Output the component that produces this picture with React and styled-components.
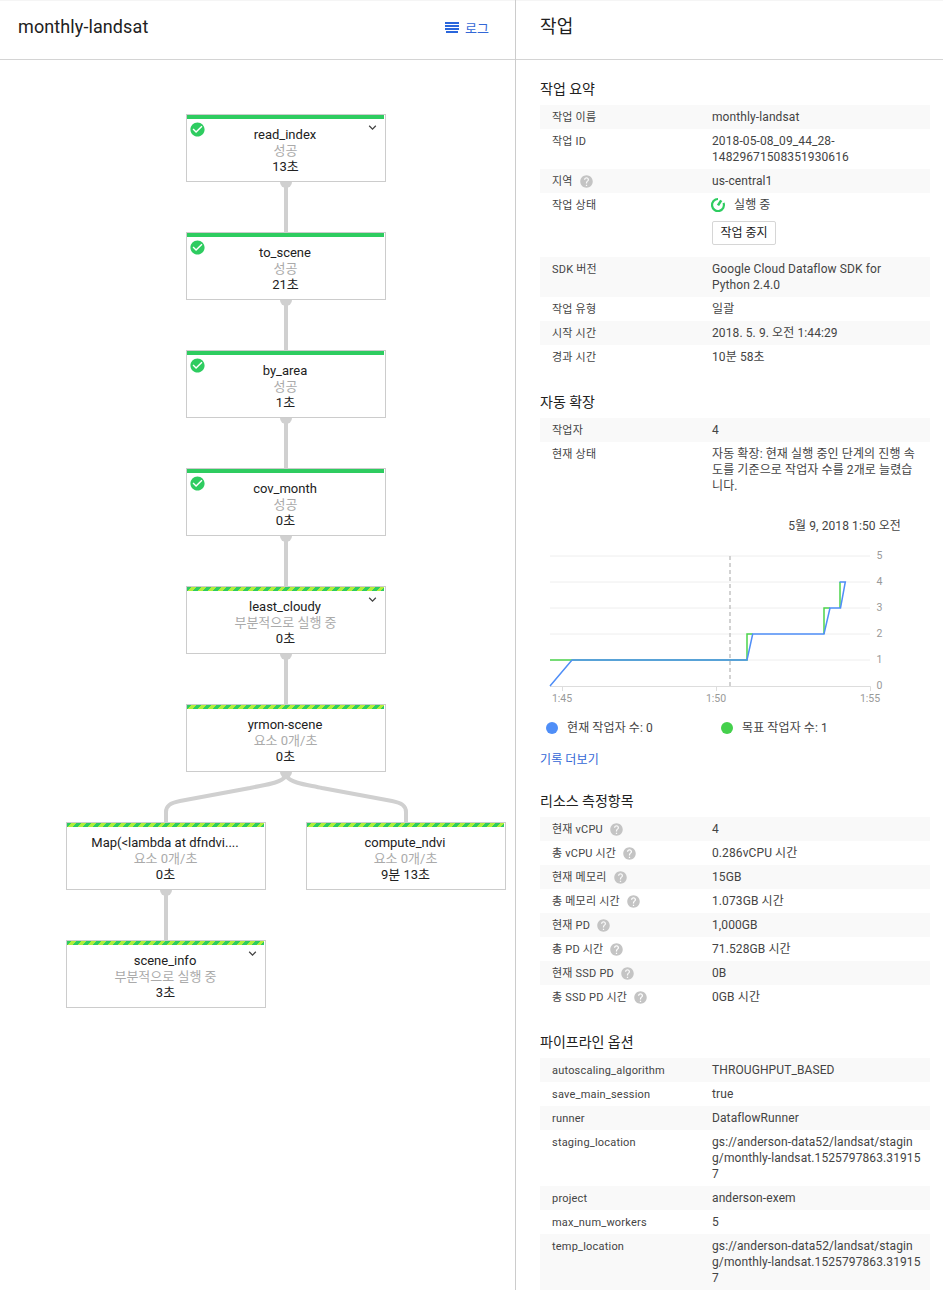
import React from "react";
import styled, { createGlobalStyle } from "styled-components";
import { MdCheckCircle, MdHelp, MdKeyboardArrowDown } from "react-icons/md";

const GlobalStyle = createGlobalStyle`
  html, body {
    margin: 0;
    padding: 0;
    background: #fff;
  }
  body {
    font-family: Roboto, "Noto Sans CJK KR", sans-serif;
    font-size: 12px;
    letter-spacing: 0.1px;
    color: #212121;
  }
`;

const Page = styled.div`
  display: flex;
  width: 943px;
  height: 1290px;
  overflow: hidden;
`;

const LeftPanel = styled.div`
  width: 515px;
  flex: none;
  border-right: 1px solid #ccc;
  display: flex;
  flex-direction: column;
`;

const RightPanel = styled.div`
  flex: 1;
  min-width: 0;
  display: flex;
  flex-direction: column;
`;

const Header = styled.div`
  height: 59px;
  flex: none;
  box-sizing: border-box;
  border-top: 1px solid #f5f5f5;
  box-shadow: 0 1px 0 #d4d4d4;
  margin-bottom: 1px;
  display: flex;
  justify-content: space-between;
  padding: ${(p) => (p.$right ? "14px 24px 0" : "14px 26px 0 18px")};
`;

const HeaderTitle = styled.div`
  font-size: 18px;
  line-height: 24px;
  color: #212121;
`;

const LogLink = styled.a`
  display: flex;
  align-items: center;
  gap: 6px;
  height: 24px;
  font-size: 13px;
  letter-spacing: 0;
  color: #3367d6;
`;

const Canvas = styled.div`
  position: relative;
  flex: 1;
`;

const EdgeLayer = styled.svg`
  position: absolute;
  left: 0;
  top: 0;
`;

const NodeBox = styled.div`
  position: absolute;
  left: ${(p) => p.$x}px;
  top: ${(p) => p.$y}px;
  width: 200px;
  height: 68px;
  box-sizing: border-box;
  border: 1px solid #ccc;
  padding-right: 1px;
  background: #fff;
  text-align: center;
  font-size: 13px;
  line-height: 16px;
  letter-spacing: 0;
`;

const NodeBar = styled.div`
  height: 4px;
  margin-bottom: 8px;
  background: ${(p) =>
    p.$striped
      ? "repeating-linear-gradient(135deg, #2ecc60 0, #2ecc60 3.5px, #b2ee3a 3.5px, #b2ee3a 7px)"
      : "#2ecc60"};
`;

const NodeName = styled.div`
  color: #212121;
  white-space: nowrap;
  margin-right: 1px;
`;

const NodeStatus = styled.div`
  color: #aaa;
`;

const NodeTime = styled.div`
  color: #212121;
`;

const NodeCheck = styled(MdCheckCircle)`
  position: absolute;
  left: 1.5px;
  top: 6px;
  color: #2ecc60;
`;

const NodeChevron = styled(MdKeyboardArrowDown)`
  position: absolute;
  right: 5px;
  top: 5px;
  color: #444;
`;

const Details = styled.div`
  padding: 18px 13px 0 24px;
`;

const Section = styled.section`
  margin-bottom: 22px;
`;

const SectionTitle = styled.h2`
  margin: 0 0 5px;
  font-size: 14px;
  font-weight: 400;
  line-height: 22px;
  letter-spacing: 0;
  color: #212121;
`;

const Row = styled.div`
  display: grid;
  grid-template-columns: 172px 1fr;
  padding: 4px 0;
  line-height: 16px;
  background: ${(p) => (p.$shade ? "#f9f9f9" : "transparent")};
`;

const Label = styled.div`
  padding: 1px 0 0 12px;
  margin-bottom: -1px;
  color: #444;
  display: flex;
  align-items: flex-start;
  gap: 6px;
  font-size: 11px;
  letter-spacing: 0.2px;
`;

const Value = styled.div`
  color: #444;
  padding-right: 9px;
  overflow-wrap: anywhere;
  word-break: ${(p) => (p.$breakAll ? "break-all" : "normal")};
`;

const HelpIcon = styled(MdHelp)`
  flex: none;
  color: #c4c4c4;
`;

const StatusLine = styled.div`
  display: flex;
  align-items: center;
  gap: 8px;
  margin-left: -2px;
  height: 16px;
`;

const StopButton = styled.button`
  display: block;
  margin: 8px 0;
  width: 64px;
  height: 24px;
  padding: 0 0 3px;
  background: #fff;
  border: 1px solid #d6d6d6;
  border-radius: 2px;
  font-family: inherit;
  font-size: 12px;
  color: #212121;
`;

const ChartDate = styled.div`
  margin-top: 20px;
  line-height: 16px;
  padding-right: 29px;
  text-align: right;
  color: #444;
`;

const ChartSvg = styled.svg`
  display: block;
  margin-top: 11px;
`;

const AxisText = styled.text`
  font-family: Roboto, sans-serif;
  font-size: 10.5px;
  letter-spacing: 0;
  fill: #999;
`;

const Legend = styled.div`
  display: flex;
  margin-top: 10px;
  line-height: 16px;
  color: #444;
`;

const LegendItem = styled.div`
  display: flex;
  align-items: center;
  gap: 9px;
  width: ${(p) => p.$width}px;
  padding-left: 6px;
  box-sizing: border-box;
`;

const LegendDot = styled.span`
  width: 12px;
  height: 12px;
  border-radius: 50%;
  background: ${(p) => p.$color};
`;

const MoreLink = styled.a`
  display: block;
  margin-top: 16px;
  line-height: 16px;
  color: #3367d6;
`;

const nodes = [
  { name: "read_index", status: "성공", time: "13초", x: 186, y: 54, done: true, chevron: true },
  { name: "to_scene", status: "성공", time: "21초", x: 186, y: 172, done: true },
  { name: "by_area", status: "성공", time: "1초", x: 186, y: 290, done: true },
  { name: "cov_month", status: "성공", time: "0초", x: 186, y: 408, done: true },
  { name: "least_cloudy", status: "부분적으로 실행 중", time: "0초", x: 186, y: 526, chevron: true },
  { name: "yrmon-scene", status: "요소 0개/초", time: "0초", x: 186, y: 644 },
  { name: "Map(<lambda at dfndvi....", status: "요소 0개/초", time: "0초", x: 66, y: 762 },
  { name: "compute_ndvi", status: "요소 0개/초", time: "9분 13초", x: 306, y: 762 },
  { name: "scene_info", status: "부분적으로 실행 중", time: "3초", x: 66, y: 880, chevron: true },
];

const edgeStarts = [
  [286, 122],
  [286, 240],
  [286, 358],
  [286, 476],
  [286, 594],
  [166, 830],
];

const summaryRows = [
  { label: "작업 이름", value: "monthly-landsat" },
  { label: "작업 ID", value: "2018-05-08_09_44_28-14829671508351930616" },
  { label: "지역", help: true, value: "us-central1" },
  { label: "작업 상태", running: true },
  { label: "SDK 버전", value: "Google Cloud Dataflow SDK for Python 2.4.0" },
  { label: "작업 유형", value: "일괄" },
  { label: "시작 시간", value: "2018. 5. 9. 오전 1:44:29" },
  { label: "경과 시간", value: "10분 58초" },
];

const scalingRows = [
  { label: "작업자", value: "4" },
  { label: "현재 상태", value: "자동 확장: 현재 실행 중인 단계의 진행 속도를 기준으로 작업자 수를 2개로 늘렸습니다." },
];

const resourceRows = [
  { label: "현재 vCPU", help: true, value: "4" },
  { label: "총 vCPU 시간", help: true, value: "0.286vCPU 시간" },
  { label: "현재 메모리", help: true, value: "15GB" },
  { label: "총 메모리 시간", help: true, value: "1.073GB 시간" },
  { label: "현재 PD", help: true, value: "1,000GB" },
  { label: "총 PD 시간", help: true, value: "71.528GB 시간" },
  { label: "현재 SSD PD", help: true, value: "0B" },
  { label: "총 SSD PD 시간", help: true, value: "0GB 시간" },
];

const optionRows = [
  { label: "autoscaling_algorithm", value: "THROUGHPUT_BASED" },
  { label: "save_main_session", value: "true" },
  { label: "runner", value: "DataflowRunner" },
  { label: "staging_location", breakAll: true, value: "gs://anderson-data52/landsat/staging/monthly-landsat.1525797863.319157" },
  { label: "project", value: "anderson-exem" },
  { label: "max_num_workers", value: "5" },
  { label: "temp_location", breakAll: true, value: "gs://anderson-data52/landsat/staging/monthly-landsat.1525797863.319157" },
];

const LogIcon = () => (
  <svg width="14" height="11" viewBox="0 0 14 11">
    <path d="M0 0h14v2H0zM0 3h14v2H0zM0 6h14v2H0zM1 9h12v2H1z" fill="#2a66dc" />
  </svg>
);

const RunningIcon = () => (
  <svg width="16" height="16" viewBox="0 0 16 16">
    <path d="M8 2 A6 6 0 1 0 13.6 5.8" fill="none" stroke="#2ecc60" strokeWidth="2.2" />
    <path d="M8 8.4 L11.2 3.4" fill="none" stroke="#2ecc60" strokeWidth="2.6" />
  </svg>
);

const Graph = () => (
  <Canvas>
    <EdgeLayer width="515" height="1230">
      {edgeStarts.map(([x, y]) => (
        <g key={`${x}-${y}`} fill="#d0d0d0">
          <circle cx={x} cy={y} r="6" />
          <rect x={x - 2} y={y} width="4" height="50" />
        </g>
      ))}
      <circle cx="286" cy="712" r="6" fill="#d0d0d0" />
      <path
        d="M286 716 C280 724 262 725 250 728 L180 741 C170 743 166 746 166 752 L166 764 M286 716 C292 724 310 725 322 728 L392 741 C402 743 406 746 406 752 L406 764"
        fill="none"
        stroke="#d0d0d0"
        strokeWidth="4"
      />
    </EdgeLayer>
    {nodes.map((node) => (
      <NodeBox key={node.name} $x={node.x} $y={node.y}>
        <NodeBar $striped={!node.done} />
        {node.done && <NodeCheck size={17} />}
        {node.chevron && <NodeChevron size={15} />}
        <NodeName>{node.name}</NodeName>
        <NodeStatus>{node.status}</NodeStatus>
        <NodeTime>{node.time}</NodeTime>
      </NodeBox>
    ))}
  </Canvas>
);

const DetailRows = ({ rows }) =>
  rows.map((row, i) => (
    <Row key={row.label} $shade={i % 2 === 0}>
      <Label>
        {row.label}
        {row.help && <HelpIcon size={15} />}
      </Label>
      <Value $breakAll={row.breakAll}>
        {row.running ? (
          <>
            <StatusLine>
              <RunningIcon />
              실행 중
            </StatusLine>
            <StopButton>작업 중지</StopButton>
          </>
        ) : (
          row.value
        )}
      </Value>
    </Row>
  ));

const gridY = [556, 582, 608, 634, 660];

const WorkerChart = () => (
  <ChartSvg width="390" height="165" viewBox="540 545 390 165">
    {gridY.map((y) => (
      <line key={y} x1="550" x2="870" y1={y} y2={y} stroke="#eee" />
    ))}
    <path d="M550 686.5H870.5V691M562.5 686.5V691M716.5 686.5V691" fill="none" stroke="#ddd" />
    <line x1="730" x2="730" y1="556" y2="686" stroke="#c4c4c4" strokeWidth="1.5" strokeDasharray="4 3" />
    <path
      d="M550 660H747V634H752.7M824 634V608H830M840 608V582"
      fill="none"
      stroke="#4cd44c"
      strokeWidth="1.5"
    />
    <path
      d="M550 686L572 660H747L752.7 634H824L830 608H840.5L845.3 582H839.5"
      fill="none"
      stroke="#4f8ef7"
      strokeWidth="1.5"
    />
    {[5, 4, 3, 2, 1, 0].map((n, i) => (
      <AxisText key={n} x="876.5" y={559 + i * 26}>
        {n}
      </AxisText>
    ))}
    <AxisText x="562" y="702" textAnchor="middle">1:45</AxisText>
    <AxisText x="716" y="702" textAnchor="middle">1:50</AxisText>
    <AxisText x="870" y="702" textAnchor="middle">1:55</AxisText>
  </ChartSvg>
);

const App = () => (
  <Page>
    <GlobalStyle />
    <LeftPanel>
      <Header>
        <HeaderTitle>monthly-landsat</HeaderTitle>
        <LogLink>
          <LogIcon />
          로그
        </LogLink>
      </Header>
      <Graph />
    </LeftPanel>
    <RightPanel>
      <Header $right>
        <HeaderTitle>작업</HeaderTitle>
      </Header>
      <Details>
        <Section>
          <SectionTitle>작업 요약</SectionTitle>
          <DetailRows rows={summaryRows} />
        </Section>
        <Section>
          <SectionTitle>자동 확장</SectionTitle>
          <DetailRows rows={scalingRows} />
          <ChartDate>5월 9, 2018 1:50 오전</ChartDate>
          <WorkerChart />
          <Legend>
            <LegendItem $width={175}>
              <LegendDot $color="#4f8ef7" />
              현재 작업자 수: 0
            </LegendItem>
            <LegendItem $width={175}>
              <LegendDot $color="#44d04c" />
              목표 작업자 수: 1
            </LegendItem>
          </Legend>
          <MoreLink>기록 더보기</MoreLink>
        </Section>
        <Section>
          <SectionTitle>리소스 측정항목</SectionTitle>
          <DetailRows rows={resourceRows} />
        </Section>
        <Section>
          <SectionTitle>파이프라인 옵션</SectionTitle>
          <DetailRows rows={optionRows} />
        </Section>
      </Details>
    </RightPanel>
  </Page>
);

export default App;
